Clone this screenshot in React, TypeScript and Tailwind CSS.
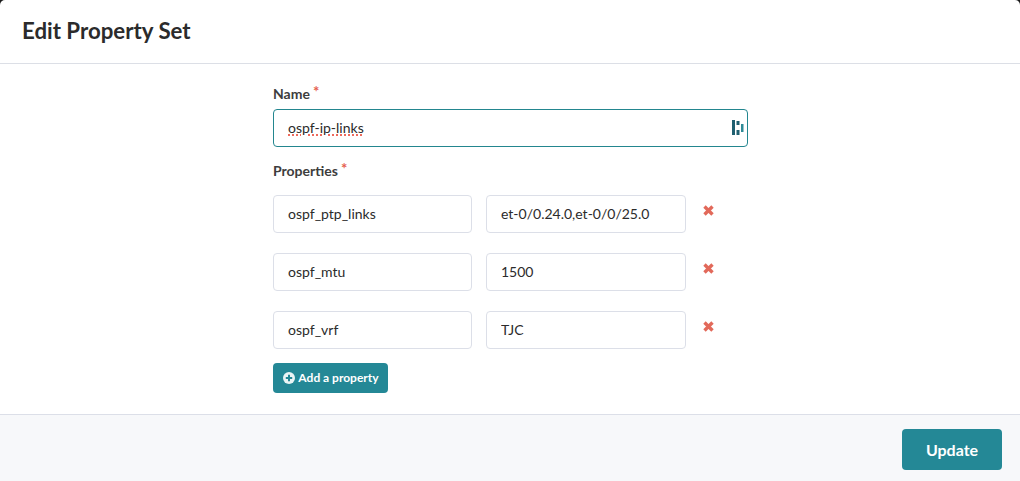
import React from "react";

const rows = [
  { key: "ospf_ptp_links", value: "et-0/0.24.0,et-0/0/25.0" },
  { key: "ospf_mtu", value: "1500" },
  { key: "ospf_vrf", value: "TJC" },
];

const inputClass =
  "h-[38px] rounded-[4px] border border-[#dcdfe8] bg-white px-[14px] pb-[2px] text-[14px] text-[#2b2b2b] outline-none";

const RequiredLabel = ({ text }: { text: string }) => (
  <div className="flex h-[18px] items-center text-[14px] font-bold leading-[18px] text-[#3d3d3d]">
    {text}
    <span className="relative top-[-3px] ml-[3px] text-[15px] font-bold leading-none text-[#e5604f]">*</span>
  </div>
);

const App: React.FC = () => {
  return (
    <div className="flex h-[481px] w-[1020px] flex-col overflow-hidden bg-[#1b1b1b] font-['Lato',sans-serif]">
      <div className="flex h-full flex-col overflow-hidden rounded-tl-[5px] rounded-tr-[5px] bg-white">
        {/* header */}
        <div className="flex h-[64px] shrink-0 items-center border-b border-[#dcdfe6] pl-[22px]">
          <h2 className="relative top-[-1px] text-[22.25px] font-bold leading-[28px] text-[#2b2b2b]">Edit Property Set</h2>
        </div>

        {/* form */}
        <div className="flex flex-1 flex-col pl-[273px] pt-[21px]">
          <div className="mb-[6px]">
            <RequiredLabel text="Name" />
          </div>
          <div className="relative h-[38px] w-[475px]">
            <input
              readOnly
              value="ospf-ip-links"
              className="h-full w-full rounded-[4px] border border-[#23868f] bg-white px-[14px] pb-[2px] text-[14px] text-[#2b2b2b] underline decoration-[#ee6a5c] decoration-dotted decoration-2 underline-offset-[2px] outline-none"
            />
            <svg className="absolute right-[4px] top-[11px]" width="12" height="15" viewBox="0 0 12 15">
              <rect x="0" y="0" width="3" height="15" fill="#1f5f70" />
              <rect x="4.5" y="1" width="3" height="4" fill="#1f5f70" />
              <rect x="4.5" y="10" width="3" height="5" fill="#1f5f70" />
              <rect x="9" y="4" width="2.5" height="8" fill="#2f8a96" />
            </svg>
          </div>

          <div className="mb-[15px] mt-[15px]">
            <RequiredLabel text="Properties" />
          </div>
          <div className="flex flex-col gap-[20px]">
            {rows.map((row) => (
              <div key={row.key} className="flex items-start">
                <input readOnly value={row.key} className={`${inputClass} w-[199px]`} />
                <input readOnly value={row.value} className={`${inputClass} ml-[14px] w-[200px]`} />
                <svg className="ml-[17px] mt-[10px]" width="11" height="11" viewBox="0 0 11 11">
                  <path d="M1.5 1.5 L9.5 9.5 M9.5 1.5 L1.5 9.5" stroke="#e2695a" strokeWidth="3.4" fill="none" />
                </svg>
              </div>
            ))}
          </div>

          <button className="mt-[14px] flex h-[30px] w-[115px] items-center justify-center gap-[3px] rounded-[4px] bg-[#248896] pl-[1px] text-[12px] font-bold text-white">
            <svg width="12" height="12" viewBox="0 0 12 12">
              <circle cx="6" cy="6" r="6" fill="#eaf4f5" />
              <path d="M6 2.8 V9.2 M2.8 6 H9.2" stroke="#248896" strokeWidth="2" />
            </svg>
            Add a property
          </button>
        </div>

        {/* footer */}
        <div className="flex h-[67px] shrink-0 items-start justify-end border-t border-[#dcdfe8] bg-[#f7f8fa] pr-[18px] pt-[14px]">
          <button className="h-[41px] w-[100px] rounded-[4px] bg-[#248896] text-[16px] font-bold text-white">Update</button>
        </div>
      </div>
    </div>
  );
};

export default App;
